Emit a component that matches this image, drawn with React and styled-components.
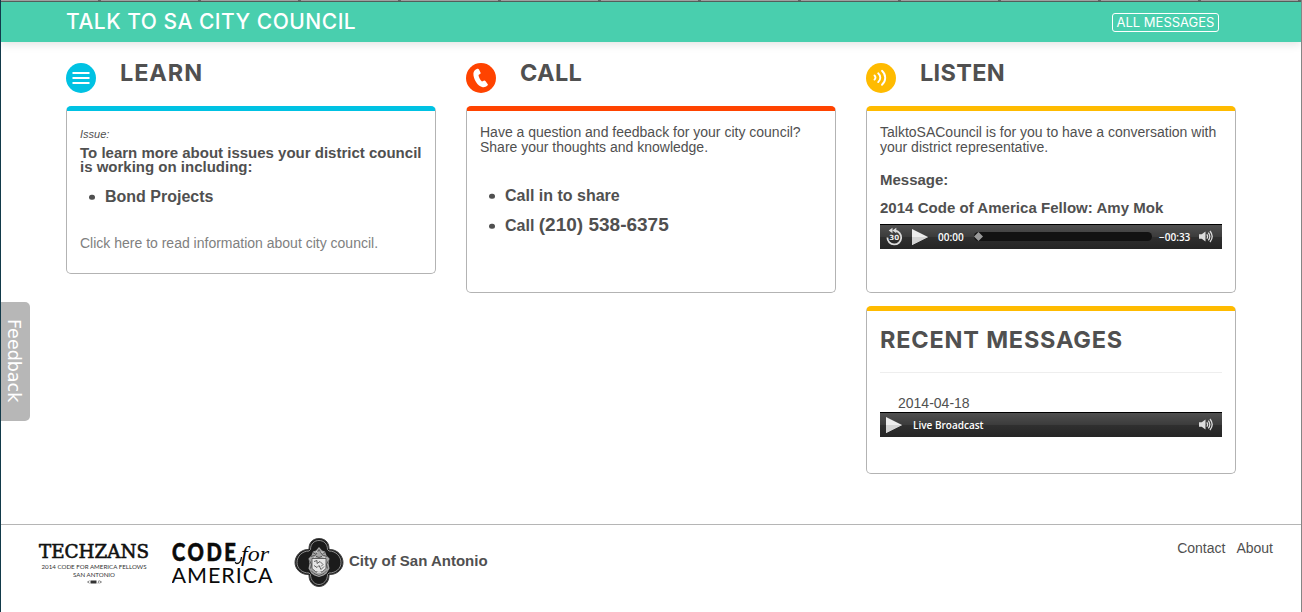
import React from 'react';
import styled, { createGlobalStyle } from 'styled-components';

const GlobalStyle = createGlobalStyle`
  *, *::before, *::after { box-sizing: border-box; }
  body { margin: 0; background: #fff; color: #505050; font-family: "Liberation Sans", Arial, sans-serif; }
  h1, h2, p, ul { margin: 0; padding: 0; font-weight: inherit; }
  a { color: inherit; text-decoration: none; }
  svg { display: block; flex: none; }
`;

const Page = styled.div`
  position: relative;
  display: flex;
  flex-direction: column;
  width: 1302px;
  height: 612px;
  overflow: hidden;
  border-left: 1px solid #123a4a;
  border-right: 1px solid #858585;
`;

const WindowEdge = styled.div`
  flex: none;
  height: 2px;
  background: repeating-linear-gradient(90deg, #a3a5a4 0 97px, #676767 97px 100px);
  border-bottom: 1px solid #58625f;
`;

const Header = styled.header`
  flex: none;
  display: flex;
  justify-content: space-between;
  height: 40px;
  padding: 0 82px 0 65px;
  background: #49cfae;
  box-shadow: 0 2px 9px rgba(0, 0, 0, 0.12);
  color: #fff;
  font-family: Inter, "Open Sans", sans-serif;
`;

const SiteTitle = styled.h1`
  padding-top: 5px;
  font-size: 21px;
  line-height: 30px;
  font-weight: 500;
  white-space: nowrap;
  letter-spacing: 0.5px;
`;

const HeaderButton = styled.a`
  width: 107px;
  text-align: center;
  height: 19px;
  margin-top: 11px;
  border: 1px solid #fff;
  border-radius: 3px;
  font-size: 13px;
  line-height: 17px;
  white-space: nowrap;
`;

const Columns = styled.main`
  flex: none;
  display: grid;
  grid-template-columns: repeat(3, 370px);
  column-gap: 30px;
  height: 482px;
  padding: 16px 0 0 65px;
`;

const Column = styled.section`
  display: flex;
  flex-direction: column;
`;

const ColumnHead = styled.div`
  display: flex;
  gap: 24px;
  height: 48px;
  padding-top: 5px;
`;

const Heading = styled.h2`
  font-family: Inter, "Open Sans", sans-serif;
  font-size: 23.5px;
  line-height: 30px;
  font-weight: 700;
  letter-spacing: ${(p) => p.$track || '0.3px'};
  margin-top: ${(p) => p.$top || '-5px'};
  white-space: nowrap;
`;

const Card = styled.div`
  height: ${(p) => p.$height}px;
  margin-bottom: 13px;
  padding: 0 13px;
  border: 1px solid #b3b3b3;
  border-top: 5px solid ${(p) => p.$accent};
  border-radius: 5px;
`;

const Issue = styled.p`
  padding-top: 16px;
  font-size: 11px;
  line-height: 14px;
  font-style: italic;
`;

const IssueTitle = styled.p`
  margin-top: 5px;
  font-size: 15px;
  line-height: 14px;
  font-weight: 700;
  white-space: nowrap;
`;

const Intro = styled.p`
  padding-top: 14px;
  font-size: 14px;
  line-height: 15px;
  white-space: nowrap;
`;

const List = styled.ul`
  display: flex;
  flex-direction: column;
  gap: ${(p) => p.$gap || 0}px;
  margin-top: ${(p) => p.$top}px;
  list-style: none;
`;

const Item = styled.li`
  display: flex;
  align-items: baseline;
  height: 20px;
  padding-left: 9px;
  font-size: 16px;
  line-height: 20px;
  font-weight: 700;
  white-space: pre;

  &::before {
    content: '';
    width: 5.5px;
    height: 5.5px;
    margin-right: 10.5px;
    border-radius: 50%;
    background: currentColor;
    transform: translateY(-2.3px);
  }
`;

const Phone = styled.span`
  font-size: 19px;
`;

const InfoLink = styled.a`
  display: block;
  margin-top: 26px;
  color: #808080;
  font-size: 14px;
  line-height: 20px;
  white-space: nowrap;
`;

const MessageTitle = styled.p`
  margin-top: ${(p) => p.$top}px;
  font-size: 15px;
  line-height: 20px;
  font-weight: 700;
  white-space: nowrap;
  letter-spacing: ${(p) => p.$track || '0'};
`;

const Rule = styled.div`
  height: 1px;
  margin-top: 17px;
  background: #eee;
`;

const DateText = styled.p`
  margin-top: 20px;
  padding-left: 18px;
  font-size: 14px;
  line-height: 20px;
`;

const Player = styled.div`
  display: flex;
  align-items: center;
  height: 25px;
  margin-top: ${(p) => p.$top}px;
  padding: 0 8px 1px 6px;
  border-top: 1px solid #000;
  background: linear-gradient(#505050, #3c3c3c 48%, #2f2f2f 52%, #252525);
  color: #fff;
  font-family: "Open Sans", "Noto Sans", sans-serif;
  font-size: 10px;
  font-weight: 600;
  white-space: nowrap;
`;

const Time = styled.span`
  width: ${(p) => p.$width}px;
  margin-left: ${(p) => p.$left}px;
`;

const Track = styled.div`
  display: flex;
  align-items: center;
  width: 178px;
  height: 9px;
  margin-left: 9px;
  border-radius: 5px;
  background: #121212;
`;

const Spacer = styled.div`
  flex: 1;
`;

const FeedbackTab = styled.a`
  position: absolute;
  left: 0;
  top: 302px;
  display: flex;
  align-items: center;
  justify-content: center;
  width: 29px;
  height: 119px;
  padding: 0 4px 2px 0;
  border-radius: 0 5px 5px 0;
  background: #b7b7b7;
  color: #fff;
  writing-mode: vertical-rl;
  font-family: "DejaVu Sans", Verdana, sans-serif;
  font-size: 17.5px;
`;

const Footer = styled.footer`
  flex: 1;
  display: flex;
  border-top: 1px solid #b5b5b5;
  padding: 13px 28px 0 37px;
`;

const CityName = styled.span`
  margin: 13px 0 0 5px;
  font-size: 15px;
  line-height: 20px;
  font-weight: 700;
  white-space: nowrap;
`;

const FooterNav = styled.nav`
  display: flex;
  gap: 11px;
  margin-left: auto;
  font-size: 14px;
  line-height: 20px;
`;

const LearnIcon = () => (
  <svg width="30" height="30" viewBox="0 0 30 30">
    <circle cx="15" cy="15" r="15" fill="#00c2e3" />
    <path d="M6.500 10h17M6.500 15h17M6.500 20h17" stroke="#fff" strokeWidth="2" />
  </svg>
);

const CallIcon = () => (
  <svg width="30" height="30" viewBox="0 0 30 30">
    <circle cx="15" cy="15" r="15" fill="#ff4300" />
    <path
      d="M11.3 5.8c.7-.3 1.4 0 1.700.7l1.500 2.900c.3.7.1 1.300-.5 1.700l-1.500 1c.2 2.200 1.700 5 3.500 6.500l1.700-.9c.7-.4 1.300-.2 1.700.4l2.200 2.800c.5.7.4 1.300-.2 1.700-1.300 1.200-3 2-4.700 1.600C11.600 23 7.200 16 7.400 10.400c.1-2 1.700-3.900 3.900-4.600z"
      fill="#fff"
    />
  </svg>
);

const ListenIcon = () => (
  <svg width="30" height="30" viewBox="0 0 30 30">
    <circle cx="15" cy="15" r="15" fill="#ffbb00" />
    <g fill="none" stroke="#fff" strokeWidth="1.9" strokeLinecap="round">
      <path d="M8.500 12.500c1.300 1.200 1.300 2.900 0 4.100" />
      <path d="M12.200 10.300c2.800 2.600 2.800 6 0 8.800" />
      <path d="M16 7.800c4.300 4 4.300 10 0 14" />
    </g>
  </svg>
);

const RewindIcon = () => (
  <svg width="17" height="19" viewBox="0 0 17 19">
    <path d="M9 3.700a6.900 6.900 0 1 1-7.600 6.800" fill="none" stroke="#ddd" strokeWidth="1.800" />
    <path d="M2.700 3.500 6.500.8v5.400zM6.500 3.500 10.300.8v5.400z" fill="#ddd" />
    <text x="3.200" y="13" textLength="10" lengthAdjust="spacingAndGlyphs" fill="#eee" fontFamily="DejaVu Sans, sans-serif" fontSize="7" fontWeight="700">30</text>
  </svg>
);

const PlayIcon = () => (
  <svg width="16" height="16" viewBox="0 0 16 16">
    <path d="M0 0 16 8 0 16z" fill="#ededed" />
    <path d="M0 8h16L0 16z" fill="#d4d4d4" />
  </svg>
);

const VolumeIcon = () => (
  <svg width="15" height="13" viewBox="0 0 15 13">
    <path d="M0 4.300h2.700L6.500 1.500v10L2.700 8.700H0z" fill="#ddd" />
    <path d="M7.800 4.300q1.600 2.200 0 4.400M9.300 2.600q3 3.900 0 7.800M11 1q4.400 5.500 0 11" fill="none" stroke="#ddd" strokeWidth="1.300" />
  </svg>
);

const Handle = () => (
  <svg width="9" height="9" viewBox="0 0 9 9">
    <path d="M4.500 0 9 4.500 4.500 9 0 4.500z" fill="#999" />
  </svg>
);

const TechzansLogo = () => (
  <svg width="112" height="50" viewBox="0 0 112 50" fill="#111">
    <text x="1" y="20" textLength="110" lengthAdjust="spacingAndGlyphs" fontFamily="DejaVu Serif, serif" fontSize="17.800" stroke="#111" strokeWidth=".6">TECHZANS</text>
    <g fontFamily="Lato, sans-serif" fontSize="6.200" fill="#333">
      <text x="3.500" y="31" textLength="105" lengthAdjust="spacingAndGlyphs">2014 CODE FOR AMERICA FELLOWS</text>
      <text x="35" y="38.500" textLength="42" lengthAdjust="spacingAndGlyphs">SAN ANTONIO</text>
    </g>
    <path d="M51.500 42.800 49.500 44l2 1.200M60 45.500l1-3M61.500 42.800l2 1.200-2 1.200" fill="none" stroke="#555" strokeWidth=".7" />
    <path d="M52.500 42.500h6v3h-6z" fill="#333" />
  </svg>
);

const CodeForAmericaLogo = () => (
  <svg width="102" height="50" viewBox="0 0 102 50" fill="#0a0a0a">
    <text x="0" y="22.500" textLength="76" lengthAdjust="spacing" transform="scale(.84 1)" fontFamily="Lato, sans-serif" fontSize="24" fontWeight="900" stroke="#0a0a0a" strokeWidth=".6">CODE</text>
    <text x="69" y="22.500" textLength="28" lengthAdjust="spacingAndGlyphs" fontFamily="Liberation Serif, serif" fontStyle="italic" fontSize="21">for</text>
    <path d="M69.500 19c-.5 4-2.500 6.500-4.500 6.500-1 0-1.600-.6-1.500-1.500" fill="none" stroke="#0a0a0a" strokeWidth="1.300" />
    <text x="-.5" y="44.700" textLength="101" lengthAdjust="spacing" fontFamily="Lato, sans-serif" fontSize="21.500">AMERICA</text>
  </svg>
);

const CitySeal = () => (
  <svg width="50" height="49" viewBox="0 .5 50 49">
    <path d="M15 11C15 4 20 1 25 1s10 3 10 10l1 1c8 0 13 7 13 13s-5 12-13 12l-1 1c0 7-5 11-10 11s-10-4-10-11l-1-1C6 37 1 31 1 25s5-13 13-13z" fill="#1b1b1b" stroke="#444" />
    <path d="M16.500 12C16.500 6 20.500 3 25 3s8.500 3 8.500 9l1.500 1.500C42 13.500 47 19 47 25s-5 10.500-12 10.500L33.500 37c0 6-4 10-8.500 10s-8.500-4-8.500-10L15 35.500C8 35.500 3 31 3 25s5-11.500 12-11.500z" fill="none" stroke="#aaa" strokeWidth=".8" />
    <path d="M25 9.500 28 13l3 1 1.500 4 3 3-1 5 1 5-3 5-3 2-4.500 1.500L20.500 38l-3-2-3-5 1-5-1-5 3-3 1.500-4 3-1z" fill="#a5a5a5" />
    <path d="M18 21h14v10q-7 8-14 0z" fill="#e6e6e6" stroke="#444" strokeWidth=".8" />
    <path d="m19 15 3 2 3-5 3 5 3-2M17 19l3-1 5 2 5-2 3 1M20 24l3-1v3l3-2 3 3-2 2M20 28l3 2 2-2 2 4 3-3M17 33l3 3 5 2 5-2 3-3M15.500 23l2 4-1 4M34.500 23l-2 4 1 4" fill="none" stroke="#444" strokeWidth=".8" />
    <path d="m22 14 2 1M27 14l2 2M20 20l2-1M28 19l3 1M23 35h4" stroke="#eee" strokeWidth=".8" />
  </svg>
);

const LogoRow = styled.div`
  display: flex;
  height: 50px;
`;

const LogoSlot = styled.div`
  width: ${(p) => p.$width}px;
`;

export default function App() {
  return (
    <Page>
      <GlobalStyle />
      <WindowEdge />
      <Header>
        <SiteTitle>TALK TO SA CITY COUNCIL</SiteTitle>
        <HeaderButton>ALL MESSAGES</HeaderButton>
      </Header>
      <Columns>
        <Column>
          <ColumnHead><LearnIcon /><Heading $track="0.9px">LEARN</Heading></ColumnHead>
          <Card $height={168} $accent="#00c2e3">
            <Issue>Issue:</Issue>
            <IssueTitle>To learn more about issues your district council<br />is working on including:</IssueTitle>
            <List $top={13}>
              <Item>Bond Projects</Item>
            </List>
            <InfoLink>Click here to read information about city council.</InfoLink>
          </Card>
        </Column>
        <Column>
          <ColumnHead><CallIcon /><Heading>CALL</Heading></ColumnHead>
          <Card $height={187} $accent="#ff4300">
            <Intro>Have a question and feedback for your city council?<br />Share your thoughts and knowledge.</Intro>
            <List $top={31} $gap={9}>
              <Item>Call in to share</Item>
              <Item>Call <Phone>(210) 538-6375</Phone></Item>
            </List>
          </Card>
        </Column>
        <Column>
          <ColumnHead><ListenIcon /><Heading>LISTEN</Heading></ColumnHead>
          <Card $height={187} $accent="#ffbb00">
            <Intro>TalktoSACouncil is for you to have a conversation with<br />your district representative.</Intro>
            <MessageTitle $top={15}>Message:</MessageTitle>
            <MessageTitle $top={8} $track="0.03px">2014 Code of America Fellow: Amy Mok</MessageTitle>
            <Player $top={6}>
              <RewindIcon />
              <Time $left={9} $width={16}><PlayIcon /></Time>
              <Time $left={10} $width={27}>00:00</Time>
              <Track><Handle /></Track>
              <Time $left={7} $width={31}>−00:33</Time>
              <Spacer />
              <VolumeIcon />
            </Player>
          </Card>
          <Card $height={168} $accent="#ffbb00">
            <Heading $top="14px" $track="0.8px">RECENT MESSAGES</Heading>
            <Rule />
            <DateText>2014-04-18</DateText>
            <Player $top={-1}>
              <PlayIcon />
              <Time $left={11} $width={90}>Live Broadcast</Time>
              <Spacer />
              <VolumeIcon />
            </Player>
          </Card>
        </Column>
      </Columns>
      <Footer>
        <LogoRow>
          <LogoSlot $width={134}><TechzansLogo /></LogoSlot>
          <LogoSlot $width={122}><CodeForAmericaLogo /></LogoSlot>
          <CitySeal />
          <CityName>City of San Antonio</CityName>
        </LogoRow>
        <FooterNav><a>Contact</a><a>About</a></FooterNav>
      </Footer>
      <FeedbackTab>Feedback</FeedbackTab>
    </Page>
  );
}
